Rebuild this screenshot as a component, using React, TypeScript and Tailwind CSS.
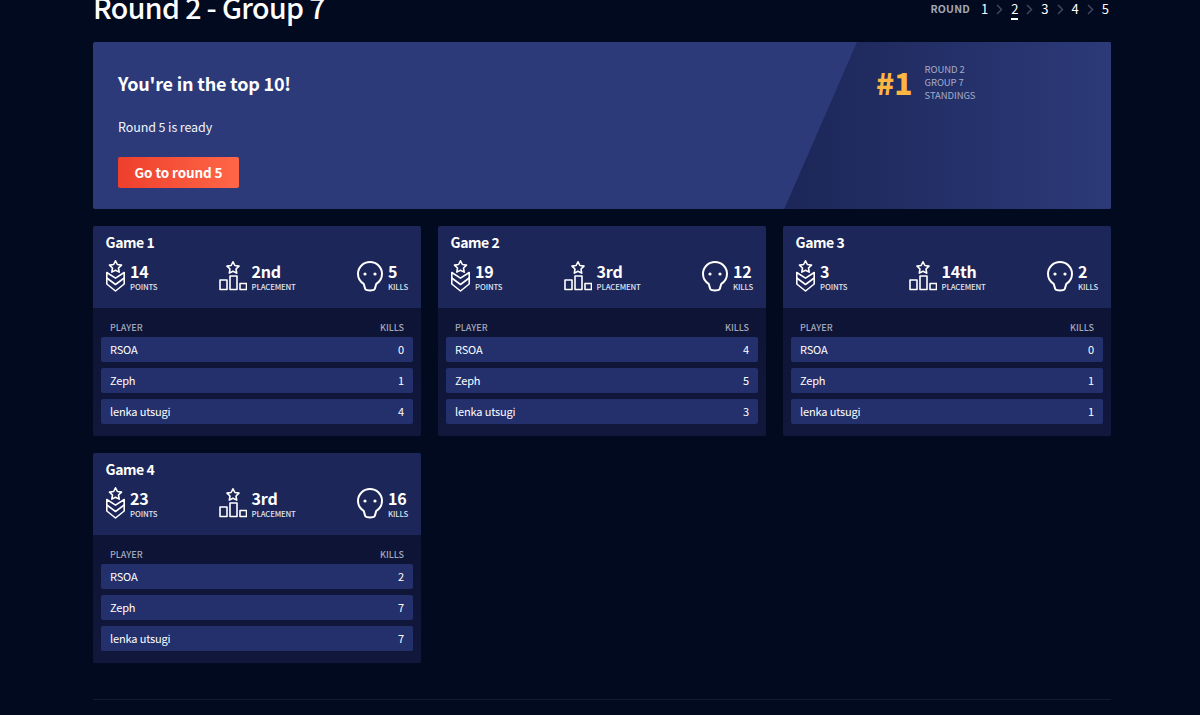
import React from 'react';

type Game = {
  title: string;
  points: number;
  placement: string;
  kills: number;
  players: [string, number][];
};

const GAMES: Game[] = [
  { title: 'Game 1', points: 14, placement: '2nd', kills: 5, players: [['RSOA', 0], ['Zeph', 1], ['lenka utsugi', 4]] },
  { title: 'Game 2', points: 19, placement: '3rd', kills: 12, players: [['RSOA', 4], ['Zeph', 5], ['lenka utsugi', 3]] },
  { title: 'Game 3', points: 3, placement: '14th', kills: 2, players: [['RSOA', 0], ['Zeph', 1], ['lenka utsugi', 1]] },
  { title: 'Game 4', points: 23, placement: '3rd', kills: 16, players: [['RSOA', 2], ['Zeph', 7], ['lenka utsugi', 7]] },
];

const STAR = 'M7 .8l1.900 3.700 4.100.6-3 2.900.7 4.100L7 10.200l-3.700 1.900.7-4.100-3-2.900 4.100-.6z';

const PointsIcon = () => (
  <svg width="19" height="32" viewBox="0 0 19 32" fill="none" stroke="white" strokeWidth="1.600" strokeLinejoin="round">
    <path transform="translate(2.500 0)" d={STAR} />
    <path d="M.8 12.500l8.700 5.700 8.700-5.700v11.500l-8.700 7-8.700-7z" />
    <path d="M.8 18l8.700 6.500 8.700-6.500" />
  </svg>
);

const PlacementIcon = () => (
  <svg width="28" height="30" viewBox="0 0 28 30" fill="none" stroke="white" strokeWidth="1.600" strokeLinejoin="round">
    <path transform="translate(7 0)" d={STAR} />
    <rect x="1" y="19" width="7" height="9.500" />
    <rect x="11" y="15" width="7" height="13.500" />
    <rect x="21" y="22.500" width="6.500" height="6" />
  </svg>
);

const SkullIcon = () => (
  <svg width="26" height="31" viewBox="0 0 26 31" fill="none" stroke="white" strokeWidth="2" strokeLinejoin="round">
    <path d="M13 1C6.300 1 1 6.200 1 12.800c0 4.400 2.300 8 5.700 10 .9 2.500 1 4.800 2 5.900.9 1 7.700 1 8.600 0 1-1.100 1.100-3.400 2-5.900 3.400-2 5.700-5.600 5.700-10C25 6.200 19.700 1 13 1z" />
    <circle cx="8" cy="13" r="1.600" fill="white" stroke="none" />
    <circle cx="18" cy="13" r="1.600" fill="white" stroke="none" />
  </svg>
);

const Stat = ({ icon, value, label }: { icon: React.ReactNode; value: React.ReactNode; label: string }) => (
  <div className="flex items-center gap-[5px]">
    {icon}
    <div className="pt-[1px]">
      <div className="text-[16px] leading-[18px] font-bold tracking-[-0.2px] text-white">{value}</div>
      <div className="text-[7.800px] leading-[11px] mt-[1px] font-medium tracking-[-0.15px] text-[#dfe2ee]">{label}</div>
    </div>
  </div>
);

const GameCard = ({ game }: { game: Game }) => (
  <div className="rounded-[2px] overflow-hidden bg-gradient-to-b from-[#0a1130] to-[#11183c]">
    <div className="h-[82px] bg-[#1c2658] px-[13px] pt-[7px]">
      <div className="text-[14px] leading-[18px] font-semibold tracking-[-0.4px] -ml-[0.5px] text-white">{game.title}</div>
      <div className="flex items-center justify-between mt-[9px]">
        <Stat icon={<PointsIcon />} value={game.points} label="POINTS" />
        <Stat icon={<PlacementIcon />} value={game.placement} label="PLACEMENT" />
        <Stat icon={<SkullIcon />} value={game.kills} label="KILLS" />
      </div>
    </div>
    <div className="px-[8px] pt-[13px] pb-[12px]">
      <div className="flex justify-between px-[9px] text-[9px] leading-[13px] h-[16px] font-medium text-[#a3a8bb]">
        <span>PLAYER</span>
        <span>KILLS</span>
      </div>
      <div className="flex flex-col gap-[6px]">
        {game.players.map(([name, kills]) => (
          <div key={name} className="h-[25px] rounded-[2px] bg-[#24306c] flex items-center justify-between px-[9px] pb-[1px] text-[11px] tracking-[-0.15px] text-white">
            <span>{name}</span>
            <span>{kills}</span>
          </div>
        ))}
      </div>
    </div>
  </div>
);

const Chevron = () => (
  <svg width="7" height="11" viewBox="0 0 7 11" fill="none" stroke="#3f4660" strokeWidth="1.500">
    <path d="M1 1l4.500 4.500L1 10" />
  </svg>
);

const RoundNav = () => (
  <div className="flex items-center gap-[8px] text-[13px] leading-[16px] text-white">
    <span className="text-[10.500px] font-bold tracking-[0.2px] text-[#a3a7b8] mr-[3px]">ROUND</span>
    {[1, 2, 3, 4, 5].map((n) => (
      <React.Fragment key={n}>
        {n === 2 ? <span className="border-b-2 border-white pb-[1px] -mb-[3px]">{n}</span> : <span>{n}</span>}
        {n < 5 && <Chevron />}
      </React.Fragment>
    ))}
  </div>
);

export default function App() {
  return (
    <div className="h-[715px] overflow-hidden bg-[#010a1f] font-['Noto_Sans_CJK_JP','Noto_Sans',sans-serif]">
      <div className="w-[1018px] ml-[93px]">
        <div className="h-[42px] flex justify-between items-start">
          <h1 className="text-[28.500px] leading-[36px] -mt-[11px] font-medium tracking-[-0.6px] text-white">Round 2 - Group 7</h1>
          <div className="mt-[1px] mr-[2px]"><RoundNav /></div>
        </div>

        <div className="relative h-[167px] rounded-[2px] overflow-hidden bg-[#2c3a79] px-[25px] pt-[27px]">
          <div className="absolute inset-0 bg-gradient-to-r from-[#1c2658] from-[68%] to-[#2c3a79] [clip-path:polygon(75.050%_0,100%_0,100%_100%,67.900%_100%)]" />
          <div className="relative">
            <div className="text-[18px] leading-[28px] font-semibold tracking-[-0.2px] text-white">You're in the top 10!</div>
            <div className="text-[12.500px] leading-[18px] mt-[21px] tracking-[-0.1px] text-[#f2f4fb]">Round 5 is ready</div>
            <button className="mt-[21px] h-[31px] w-[121px] rounded-[2px] bg-gradient-to-r from-[#ee3f2c] to-[#ff6647] text-[13.500px] font-semibold tracking-[-0.1px] text-white">
              Go to round 5
            </button>
          </div>
          <div className="absolute left-[783px] top-[20px] flex items-center gap-[12px]">
            <div className="text-[30px] leading-[40px] font-black text-[#fdb640]">#1</div>
            <div className="text-[9.500px] leading-[13px] tracking-[-0.1px] text-[#a6abc7]">
              <div>ROUND 2</div>
              <div>GROUP 7</div>
              <div>STANDINGS</div>
            </div>
          </div>
        </div>

        <div className="grid grid-cols-3 gap-[17px] mt-[17px]">
          {GAMES.map((g) => (
            <GameCard key={g.title} game={g} />
          ))}
        </div>

        <div className="mt-[36px] border-t border-[#141a30]" />
      </div>
    </div>
  );
}
